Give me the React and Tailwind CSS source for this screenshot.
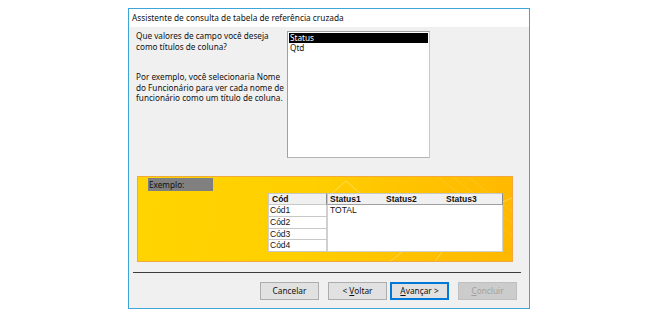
import React from "react";

const font = { fontFamily: '"Noto Sans", "Open Sans", sans-serif' };
const tfont = { fontFamily: '"Liberation Sans", Arial, sans-serif' };

function Btn({ children, primary, disabled }) {
  return (
    <div
      className={
        "w-[59px] h-[18px] flex items-center justify-center whitespace-pre text-[8.3px] leading-none " +
        (disabled
          ? "bg-[#cccccc] border border-[#bfbfbf] text-[#a0a0a0]"
          : primary
          ? "bg-[#e1e1e1] border-2 border-[#0078d7] text-[#111]"
          : "bg-[#e1e1e1] border border-[#adadad] text-[#111]")
      }
    >
      {children}
    </div>
  );
}

export default function App() {
  return (
    <div className="w-[670px] h-[317px] bg-white overflow-hidden" style={font}>
      <div className="ml-[128px] mt-[8px] w-[402px] h-[301px] border border-[#3ea6d6] bg-[#f0f0f0] flex flex-col">
        <div className="h-[18px] bg-white flex items-center pl-[3px] text-[8.3px] text-[#111] whitespace-nowrap">
          Assistente de consulta de tabela de referência cruzada
        </div>
        <div className="flex pl-[7px] pt-[4px]">
          <div className="w-[151px] text-[8.2px] leading-[10.5px] text-[#111] whitespace-nowrap">
            <div>Que valores de campo você deseja<br />como títulos de coluna?</div>
            <div className="mt-[20px]">
              Por exemplo, você selecionaria Nome<br />do Funcionário para ver cada nome de<br />funcionário como um título de coluna.
            </div>
          </div>
          <div className="w-[143px] h-[127px] bg-white border border-[#a0a0a0] border-r-[#c8c8c8] border-b-[#b4b4b4] p-[1px] text-[8.2px] leading-[10px]">
            <div className="bg-black text-white pl-[1px] h-[10px] flex items-center">Status</div>
            <div className="pl-[1px] text-[#111]">Qtd</div>
          </div>
        </div>
        <div
          className="relative ml-[8px] mt-[18px] w-[376px] h-[86px] border border-[#f3a83c] overflow-hidden"
          style={{ background: "linear-gradient(100deg, #ffd400 0%, #ffcf00 45%, #ffc300 70%, #ffb800 100%)" }}
        >
          <svg className="absolute inset-0" width="376" height="86" viewBox="0 0 376 86">
            <g stroke="#ffffff" strokeOpacity="0.35" fill="none" strokeWidth="1">
              <path d="M180 28 L208 4 L236 28" />
              <path d="M296 86 L330 40 L376 20" />
              <path d="M250 86 L290 55" />
            </g>
            <g stroke="#ffffff" strokeOpacity="0.12" strokeWidth="1">
              <path d="M300 0 L376 60" />
              <path d="M315 0 L376 48" />
              <path d="M330 0 L376 36" />
            </g>
          </svg>
          <div className="relative flex flex-col">
            <div className="ml-[10px] mt-[1px] w-[65px] h-[13px] bg-[#808080] text-[8.2px] leading-[13px] pl-[1px] text-[#111]">
              Exemplo:
            </div>
            <div className="ml-[130px] mt-[2px] flex text-[8.5px]" style={tfont}>
              <div className="w-[59px] flex flex-col">
                <div className="h-[12px] bg-[#f0f0f0] border border-[#c8c8c8] border-r-[#8a8a8a] font-bold pl-[3px] leading-[11px] text-[#111]">Cód</div>
                {["Cód1", "Cód2", "Cód3", "Cód4"].map((c) => (
                  <div key={c} className="h-[11.75px] bg-white border-b border-[#c8c8c8] border-x border-x-[#d0d0d0] pl-[1px] leading-[11px] text-[#111]">
                    {c}
                  </div>
                ))}
              </div>
              <div className="w-[176px] flex flex-col">
                <div className="h-[12px] bg-[#f0f0f0] border border-[#c8c8c8] border-r-[#8a8a8a] border-b-[#a0a0a0] flex font-bold leading-[11px] text-[#111]">
                  <div className="w-[58px] pl-[2px]">Status1</div>
                  <div className="w-[60px]">Status2</div>
                  <div>Status3</div>
                </div>
                <div className="h-[47px] bg-white border-x border-b border-[#d0d0d0] pl-[2px] leading-[11px] text-[#111]">TOTAL</div>
              </div>
            </div>
          </div>
        </div>
        <div className="ml-[4px] mt-[10px] w-[388px] h-px bg-[#3c3c3c]" />
        <div className="mt-[9px] flex pl-[131px] gap-[9px]">
          <Btn>Cancelar</Btn>
          <div className="flex gap-[3px]">
            <Btn>{"< "}<span className="underline">V</span>oltar</Btn>
            <Btn primary><span className="underline">A</span>{"vançar >"}</Btn>
          </div>
          <Btn disabled><span className="underline">C</span>oncluir</Btn>
        </div>
      </div>
    </div>
  );
}
